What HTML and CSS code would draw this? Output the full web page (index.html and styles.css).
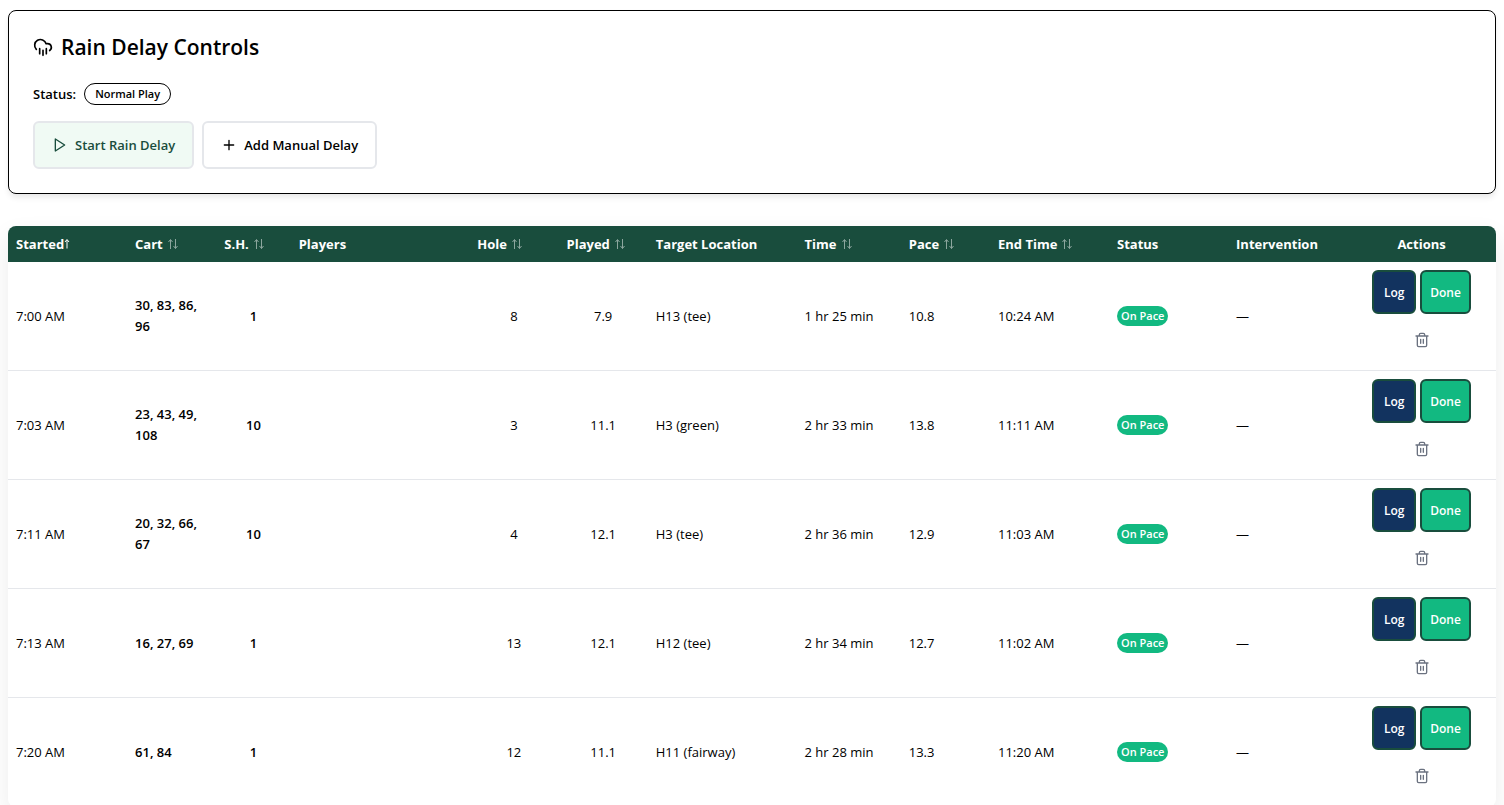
FILE: index.html
```
<!DOCTYPE html>
<html lang="en">
<head>
<meta charset="utf-8">
<title>Rain Delay Controls</title>
<link rel="stylesheet" href="styles.css">
</head>
<body>
<svg class="sprite" aria-hidden="true">
  <symbol id="sort" viewBox="0 0 12 12"><path d="M3.5 11V2M1.5 4l2-2.5 2 2.5M8.500 1v9.500M6.500 8l2 2.500 2-2.500"/></symbol>
  <symbol id="trash" viewBox="0 0 24 24"><path d="M3 6h18M19 6v14a2 2 0 0 1-2 2H7a2 2 0 0 1-2-2V6M8 6V4a2 2 0 0 1 2-2h4a2 2 0 0 1 2 2v2M10 11v6M14 11v6"/></symbol>
</svg>
<main class="page">
  <section class="card">
    <h1 class="card-title">
      <svg class="icon icon-lg" viewBox="0 0 24 24" aria-hidden="true"><path d="M4 14.899A7 7 0 1 1 15.710 8h1.790a4.500 4.500 0 0 1 2.500 8.242M16 14v6M8 14v6M12 16v6"/></svg>
      Rain Delay Controls
    </h1>
    <div class="status-line"><span class="status-label">Status:</span><span class="pill">Normal Play</span></div>
    <div class="controls">
      <button class="btn btn-start" type="button"><svg class="icon" viewBox="0 0 24 24" aria-hidden="true"><path d="M5 3l14 9-14 9z"/></svg>Start Rain Delay</button>
      <button class="btn" type="button"><svg class="icon" viewBox="0 0 24 24" aria-hidden="true"><path d="M5 12h14M12 5v14"/></svg>Add Manual Delay</button>
    </div>
  </section>

  <table class="rounds">
    <colgroup>
      <col class="w8"><col class="w6"><col class="w5"><col class="w12"><col class="w6"><col class="w6"><col class="w10"><col class="w7"><col class="w6"><col class="w8"><col class="w8"><col class="w8"><col class="w10">
    </colgroup>
    <thead>
      <tr>
        <th><button class="sort" type="button">Started<svg class="arrow-up" viewBox="0 0 6 12" aria-hidden="true"><path d="M3 10.500V2M1 4l2-2.500L5 4"/></svg></button></th>
        <th><button class="sort" type="button">Cart<svg class="arrows" aria-hidden="true"><use href="#sort"/></svg></button></th>
        <th><button class="sort" type="button">S.H.<svg class="arrows" aria-hidden="true"><use href="#sort"/></svg></button></th>
        <th>Players</th>
        <th><button class="sort" type="button">Hole<svg class="arrows" aria-hidden="true"><use href="#sort"/></svg></button></th>
        <th><button class="sort" type="button">Played<svg class="arrows" aria-hidden="true"><use href="#sort"/></svg></button></th>
        <th>Target Location</th>
        <th><button class="sort" type="button">Time<svg class="arrows" aria-hidden="true"><use href="#sort"/></svg></button></th>
        <th><button class="sort" type="button">Pace<svg class="arrows" aria-hidden="true"><use href="#sort"/></svg></button></th>
        <th><button class="sort" type="button">End Time<svg class="arrows" aria-hidden="true"><use href="#sort"/></svg></button></th>
        <th>Status</th>
        <th>Intervention</th>
        <th class="center">Actions</th>
      </tr>
    </thead>
    <tbody>
      <tr>
        <td>7:00 AM</td><td class="strong">30, 83, 86, 96</td><td class="strong center">1</td><td></td><td class="center">8</td><td class="center">7.9</td><td>H13 (tee)</td><td>1 hr 25 min</td><td>10.8</td><td>10:24 AM</td><td><span class="badge">On Pace</span></td><td>—</td>
        <td><div class="actions"><button class="act log" type="button">Log</button><button class="act done" type="button">Done</button><button class="act remove" type="button" aria-label="Delete"><svg class="icon" aria-hidden="true"><use href="#trash"/></svg></button></div></td>
      </tr>
      <tr>
        <td>7:03 AM</td><td class="strong">23, 43, 49, 108</td><td class="strong center">10</td><td></td><td class="center">3</td><td class="center">11.1</td><td>H3 (green)</td><td>2 hr 33 min</td><td>13.8</td><td>11:11 AM</td><td><span class="badge">On Pace</span></td><td>—</td>
        <td><div class="actions"><button class="act log" type="button">Log</button><button class="act done" type="button">Done</button><button class="act remove" type="button" aria-label="Delete"><svg class="icon" aria-hidden="true"><use href="#trash"/></svg></button></div></td>
      </tr>
      <tr>
        <td>7:11 AM</td><td class="strong">20, 32, 66, 67</td><td class="strong center">10</td><td></td><td class="center">4</td><td class="center">12.1</td><td>H3 (tee)</td><td>2 hr 36 min</td><td>12.9</td><td>11:03 AM</td><td><span class="badge">On Pace</span></td><td>—</td>
        <td><div class="actions"><button class="act log" type="button">Log</button><button class="act done" type="button">Done</button><button class="act remove" type="button" aria-label="Delete"><svg class="icon" aria-hidden="true"><use href="#trash"/></svg></button></div></td>
      </tr>
      <tr>
        <td>7:13 AM</td><td class="strong">16, 27, 69</td><td class="strong center">1</td><td></td><td class="center">13</td><td class="center">12.1</td><td>H12 (tee)</td><td>2 hr 34 min</td><td>12.7</td><td>11:02 AM</td><td><span class="badge">On Pace</span></td><td>—</td>
        <td><div class="actions"><button class="act log" type="button">Log</button><button class="act done" type="button">Done</button><button class="act remove" type="button" aria-label="Delete"><svg class="icon" aria-hidden="true"><use href="#trash"/></svg></button></div></td>
      </tr>
      <tr>
        <td>7:20 AM</td><td class="strong">61, 84</td><td class="strong center">1</td><td></td><td class="center">12</td><td class="center">11.1</td><td>H11 (fairway)</td><td>2 hr 28 min</td><td>13.3</td><td>11:20 AM</td><td><span class="badge">On Pace</span></td><td>—</td>
        <td><div class="actions"><button class="act log" type="button">Log</button><button class="act done" type="button">Done</button><button class="act remove" type="button" aria-label="Delete"><svg class="icon" aria-hidden="true"><use href="#trash"/></svg></button></div></td>
      </tr>
    </tbody>
  </table>
</main>
</body>
</html>
```
FILE: styles.css
```
* { box-sizing: border-box; }

html { scrollbar-width: none; }

body {
  margin: 0;
  background: #fff;
  color: #000;
  font-family: "Segoe UI", "Open Sans", "Noto Sans", sans-serif;
  font-size: 13px;
  line-height: 21px;
}

button { font: inherit; color: inherit; cursor: pointer; }

.sprite { display: none; }

.page {
  display: flex;
  flex-direction: column;
  gap: 32px;
  padding: 10px 8px;
}

.icon {
  width: 16px;
  height: 16px;
  flex: none;
  fill: none;
  stroke: currentColor;
  stroke-width: 2;
  stroke-linecap: round;
  stroke-linejoin: round;
}

.icon-lg { width: 20px; height: 20px; }

.card {
  padding: 24px;
  border: 1px solid #000;
  border-radius: 8px;
  box-shadow: 0 4px 6px -1px rgba(0, 0, 0, .1);
}

.card-title {
  display: flex;
  align-items: center;
  gap: 8px;
  margin: 0 0 24px;
  font-size: 21px;
  line-height: 24px;
  font-weight: 600;
}

.status-line {
  display: flex;
  align-items: center;
  gap: 8px;
  margin-bottom: 16px;
}

.status-label { font-weight: 600; }

.pill {
  padding: 0 10px;
  border: 1px solid #000;
  border-radius: 11px;
  font-size: 11px;
  line-height: 20px;
  font-weight: 600;
}

.controls { display: flex; gap: 8px; }

.btn {
  display: flex;
  align-items: center;
  gap: 7px;
  min-height: 48px;
  padding: 0 17px;
  border: 2px solid #e5e7eb;
  border-radius: 6px;
  background: #fff;
  font-weight: 600;
}

.btn-start { background: #f0faf4; color: #194d3d; }

.rounds {
  width: 100%;
  table-layout: fixed;
  border-collapse: separate;
  border-spacing: 0;
  border-radius: 8px;
  overflow: hidden;
  box-shadow: 0 10px 24px rgba(0, 0, 0, .08);
}

.w5 { width: 5%; }
.w6 { width: 6%; }
.w7 { width: 7%; }
.w8 { width: 8%; }
.w10 { width: 10%; }
.w12 { width: 12%; }

th {
  height: 36px;
  padding: 0 8px;
  background: #194d3d;
  color: #fff;
  font-weight: 700;
  text-align: left;
  white-space: nowrap;
}

td {
  padding: 8px;
  border-bottom: 1px solid #e5e7eb;
}

.center { text-align: center; }
.strong { font-weight: 600; }

.sort {
  display: flex;
  align-items: center;
  padding: 0;
  border: 0;
  background: none;
}

.arrows, .arrow-up {
  height: 12px;
  fill: none;
  stroke: currentColor;
  stroke-width: 1;
}

.arrows { width: 12px; margin-left: 4px; opacity: .5; }
.arrow-up { width: 6px; }

.badge {
  display: inline-block;
  vertical-align: top;
  padding: 0 4px;
  border-radius: 10px;
  background: #12b981;
  color: #fff;
  font-size: 11px;
  line-height: 20px;
  font-weight: 600;
}

.actions {
  display: flex;
  flex-wrap: wrap;
  justify-content: center;
  gap: 4px;
}

.act {
  display: flex;
  align-items: center;
  justify-content: center;
  min-width: 44px;
  height: 44px;
  padding: 0 8px;
  border: 2px solid #194d3d;
  border-radius: 6px;
  color: #fff;
  font-size: 12px;
  font-weight: 600;
}

.log { background: #12335f; }
.done { background: #12b981; }
.remove { border-color: transparent; background: none; color: #6b7280; }
```
